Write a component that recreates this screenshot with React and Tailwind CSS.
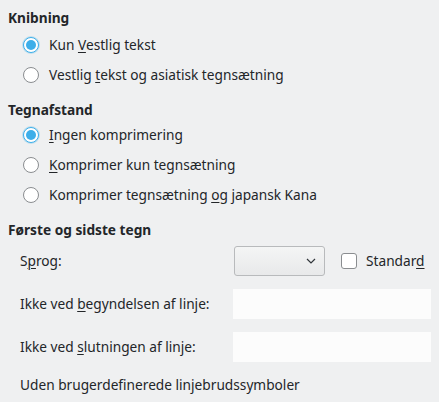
import React from 'react';

const U = ({ children }) => <span className="underline underline-offset-2 decoration-1">{children}</span>;

const Radio = ({ checked, children }) => (
    <div className="flex items-center h-[30px] pl-[23px]">
        {checked ? (
            <span className="w-4 h-4 rounded-full border border-[#3daee9] bg-white flex items-center justify-center shadow-[0_0_0_1px_rgba(61,174,233,0.25)]">
                <span className="w-[10px] h-[10px] rounded-full bg-[#3daee9]" />
            </span>
        ) : (
            <span className="w-4 h-4 rounded-full border border-[#8a8d90] bg-white" />
        )}
        <span className="ml-[10px]">{children}</span>
    </div>
);

const Heading = ({ children, className = '' }) => (
    <div className={`font-bold h-[20px] flex items-center pl-2 ${className}`}>{children}</div>
);

export default function App() {
    return (
        <div
            className="w-[439px] h-[402px] bg-[#eff0f1] text-[#232629] text-[13.7px] overflow-hidden pt-2"
            style={{ fontFamily: '"Noto Sans", sans-serif' }}
        >
            <Heading>Knibning</Heading>
            <div className="mt-[2px]">
                <Radio checked>Kun <U>V</U>estlig tekst</Radio>
                <Radio>Vestlig <U>t</U>ekst og asiatisk tegnsætning</Radio>
            </div>

            <Heading className="mt-[10px]">Tegnafstand</Heading>
            <div>
                <Radio checked><U>I</U>ngen komprimering</Radio>
                <Radio><U>K</U>omprimer kun tegnsætning</Radio>
                <Radio>Komprimer tegnsætning <U>o</U>g japansk Kana</Radio>
            </div>

            <Heading className="mt-[10px]">Første og sidste tegn</Heading>
            <div className="pl-5 pr-2">
                <div className="flex items-center h-[30px] mt-[6px]">
                    <span className="w-[214px]">S<U>p</U>rog:</span>
                    <div className="w-[91px] h-[30px] rounded-[3px] border border-[#b8babc] bg-gradient-to-b from-[#f4f5f5] to-[#e8e9ea] flex items-center justify-end pr-[8px]">
                        <svg width="10" height="6" viewBox="0 0 10 6" fill="none">
                            <path d="M1 1l4 4 4-4" stroke="#31363b" strokeWidth="1.2" />
                        </svg>
                    </div>
                    <span className="ml-4 w-4 h-4 rounded-[3px] border border-[#8a8d90] bg-white" />
                    <span className="ml-[9px]">Standar<U>d</U></span>
                </div>
                <div className="flex items-center h-[30px] mt-[13px]">
                    <span className="w-[213px]">Ikke ved <U>b</U>egyndelsen af linje:</span>
                    <div className="w-[198px] h-[30px] bg-[#fcfcfc]" />
                </div>
                <div className="flex items-center h-[30px] mt-[13px]">
                    <span className="w-[213px]">Ikke ved <U>s</U>lutningen af linje:</span>
                    <div className="w-[198px] h-[30px] bg-[#fcfcfc]" />
                </div>
                <div className="flex items-center h-[20px] mt-[13px]">
                    Uden brugerdefinerede linjebrudssymboler
                </div>
            </div>
        </div>
    );
}
